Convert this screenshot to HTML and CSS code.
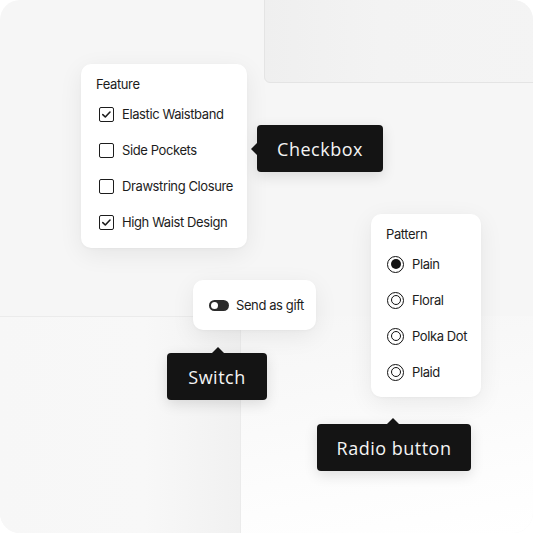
FILE: index.html
```html
<!DOCTYPE html>
<html>
<head>
<meta charset="utf-8">
<link rel="stylesheet" href="styles.css">
</head>
<body>
<div class="canvas">
  <div class="panel-top"></div>
  <div class="panel-bottom"></div>
  <div class="panel-right"></div>

  <div class="card feature">
    <div class="card-title">Feature</div>
    <div class="row"><span class="box checked"><svg viewBox="0 0 15 15"><path d="M3.8 7.6 L6.3 10 L11 5" /></svg></span>Elastic Waistband</div>
    <div class="row"><span class="box"></span>Side Pockets</div>
    <div class="row"><span class="box"></span>Drawstring Closure</div>
    <div class="row"><span class="box checked"><svg viewBox="0 0 15 15"><path d="M3.8 7.6 L6.3 10 L11 5" /></svg></span>High Waist Design</div>
  </div>

  <div class="tip tip-left tip-checkbox">Checkbox</div>

  <div class="card switch-card">
    <span class="toggle"><span class="knob"></span></span>Send as gift
  </div>

  <div class="tip tip-up tip-switch">Switch</div>

  <div class="card pattern">
    <div class="card-title">Pattern</div>
    <div class="row"><span class="radio on"><span class="dot"></span></span>Plain</div>
    <div class="row"><span class="radio"><span class="dot"></span></span>Floral</div>
    <div class="row"><span class="radio"><span class="dot"></span></span>Polka Dot</div>
    <div class="row"><span class="radio"><span class="dot"></span></span>Plaid</div>
  </div>

  <div class="tip tip-up tip-radio">Radio button</div>
</div>
</body>
</html>
```

FILE: styles.css
```css
* { box-sizing: border-box; }
html, body { margin: 0; padding: 0; background: #ffffff; }
body { width: 533px; height: 533px; overflow: hidden; font-family: Inter, "Liberation Sans", sans-serif; }

.canvas {
  position: relative;
  width: 533px;
  height: 533px;
  border-radius: 20px;
  overflow: hidden;
  background: #f6f6f6;
}

.panel-top {
  position: absolute;
  left: 264px; top: -10px;
  width: 290px; height: 93px;
  border: 1px solid #e4e4e4;
  border-radius: 6px;
  background: linear-gradient(90deg, #efefef 0%, #f3f3f3 40%, #f4f4f4 100%);
}

.panel-bottom {
  position: absolute;
  left: 0; top: 316px;
  width: 240px; height: 217px;
  border-top: 1px solid #ebebeb;
  background: linear-gradient(90deg, #f7f7f7 0%, #f8f8f8 60%, #f1f1f1 100%);
}

.panel-right {
  position: absolute;
  left: 240px; top: 316px;
  width: 293px; height: 217px;
  border-left: 1px solid #ebebeb;
  background: linear-gradient(170deg, #f6f6f6 0%, #f9f9f9 35%, #fdfdfd 75%, #ffffff 100%);
}

.card {
  position: absolute;
  background: #ffffff;
  border-radius: 10px;
  box-shadow: 0 6px 24px rgba(0,0,0,0.07), 0 1px 3px rgba(0,0,0,0.03);
  color: #1c1c1c;
  font-size: 13px;
  letter-spacing: -0.4px;
  white-space: nowrap;
}

.card-title { font-size: 13px; height: 20px; line-height: 20px; }

.row {
  display: flex;
  align-items: center;
  height: 36px;
}

.feature {
  left: 81px; top: 64px;
  width: 166px; height: 184px;
  padding: 10px 15px 0 15px;
}
.feature .card-title { margin-bottom: 2px; }
.feature .row { padding-left: 3px; }

.box {
  width: 15px; height: 15px;
  border: 1.4px solid #1c1c1c;
  border-radius: 2px;
  margin-right: 8px;
  display: flex;
  align-items: center;
  justify-content: center;
  flex: none;
}
.box svg { width: 15px; height: 15px; flex: none; }
.box path { fill: none; stroke: #1c1c1c; stroke-width: 1.6; stroke-linecap: round; stroke-linejoin: round; }

.switch-card {
  left: 193px; top: 280px;
  width: 123px; height: 50px;
  display: flex;
  align-items: center;
  padding-left: 16px;
}
.toggle {
  width: 20px; height: 11px;
  border-radius: 6px;
  background: #2b2b2b;
  margin-right: 7px;
  display: flex;
  align-items: center;
  padding-left: 2px;
  flex: none;
}
.knob { width: 7px; height: 7px; border-radius: 50%; background: #fff; }

.pattern {
  left: 371px; top: 214px;
  width: 110px; height: 183px;
  padding: 10px 15px 0 15px;
}
.pattern .card-title { margin-bottom: 2px; }
.pattern .row { padding-left: 1px; }

.radio {
  width: 17px; height: 17px;
  border-radius: 50%;
  border: 1.8px solid #111;
  display: flex;
  align-items: center;
  justify-content: center;
  margin-right: 8px;
  flex: none;
}
.radio .dot {
  width: 10px; height: 10px;
  border-radius: 50%;
  border: 1.8px solid #111;
  flex: none;
}
.radio.on .dot { width: 10px; height: 10px; background: #111; border: none; }

.tip {
  position: absolute;
  background: #141414;
  color: #f4f4f4;
  border-radius: 4px;
  height: 47px;
  display: flex;
  align-items: center;
  justify-content: center;
  font-family: "Open Sans", "DejaVu Sans", sans-serif;
  font-size: 18px;
  letter-spacing: 0.5px;
  box-shadow: 0 4px 14px rgba(0,0,0,0.12);
}
.tip::before {
  content: "";
  position: absolute;
  width: 0; height: 0;
}
.tip-left::before {
  left: -6px; top: 50%;
  margin-top: -6px;
  border-top: 6px solid transparent;
  border-bottom: 6px solid transparent;
  border-right: 6px solid #141414;
}
.tip-up::before {
  top: -6px; left: 50%;
  margin-left: -6px;
  border-left: 6px solid transparent;
  border-right: 6px solid transparent;
  border-bottom: 6px solid #141414;
}

.tip-checkbox { left: 257px; top: 125px; width: 126px; }
.tip-switch { left: 167px; top: 353px; width: 100px; }
.tip-switch::before { left: 51px; }
.tip-radio { left: 317px; top: 424px; width: 154px; }
.tip-radio::before { left: 76px; }
```
